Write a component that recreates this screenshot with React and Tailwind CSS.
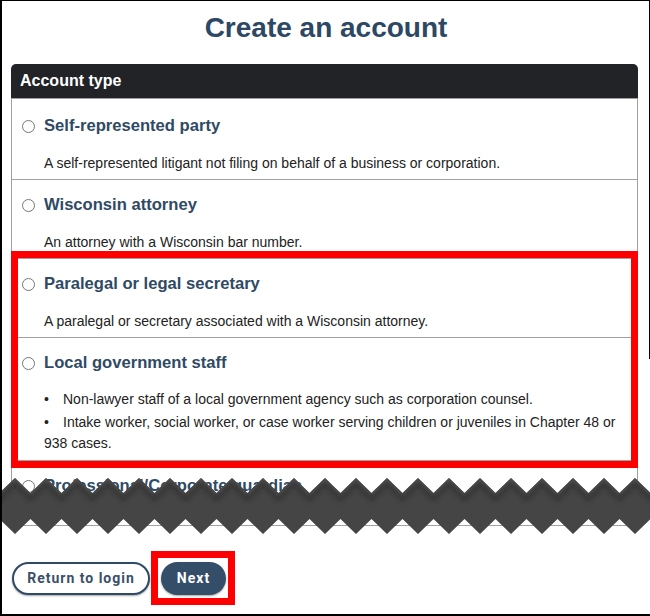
import React from "react";

function Radio() {
  return (
    <span className="block w-[13px] h-[13px] shrink-0 rounded-full border border-[#767676] bg-white" />
  );
}

function Heading({ children }) {
  return (
    <div className="flex items-center gap-[9px]">
      <Radio />
      <span className="text-[16.6px] leading-[20px] font-bold text-[#2f4a65]">{children}</span>
    </div>
  );
}

function Zigzag() {
  const period = 31;
  const start = 15;
  const top = [];
  const bottom = [];
  for (let k = -1; k <= 21; k++) {
    const x = start + period * k;
    top.push(`${x},2`, `${x + period / 2},17`);
  }
  for (let k = 21; k >= -1; k--) {
    const x = start + period * k;
    bottom.push(`${x + period / 2},43`, `${x},58`);
  }
  const poly = [...top, ...bottom].join(" ");
  const shadow = [];
  for (let k = -1; k <= 21; k++) {
    const x = start + period * k;
    shadow.push(`${x},8`, `${x + period / 2},23`);
  }
  return (
    <svg width="652" height="62" viewBox="0 0 652 62" className="block">
      <defs>
        <clipPath id="zz">
          <polygon points={poly} />
        </clipPath>
        <filter id="bl" x="-10%" y="-50%" width="120%" height="200%">
          <feGaussianBlur stdDeviation="2" />
        </filter>
      </defs>
      <polygon points={poly} fill="#454545" />
      <g clipPath="url(#zz)">
        <polyline points={top.join(" ")} fill="none" stroke="#525252" strokeWidth="4" filter="url(#bl)" />
        <polyline points={shadow.join(" ")} fill="none" stroke="#2f2f2f" strokeWidth="4" opacity="0.7" filter="url(#bl)" />
      </g>
    </svg>
  );
}

export default function App() {
  return (
    <div className="relative w-[650px] h-[616px] overflow-hidden bg-white border-l-2 border-t border-b-2 border-black font-['Liberation_Sans',Arial,sans-serif] text-[#222]">
      <div className="absolute right-0 top-0 w-px h-[358px] bg-black" />

      <h1 className="pt-[11px] text-center text-[28px] leading-[32px] font-bold text-[#2c4864]">
        Create an account
      </h1>

      <div className="mt-[20px] ml-[9px] w-[627px]">
        <div className="h-[35px] flex items-center pl-[9px] rounded-t-[5px] bg-[#212327] border-b border-[#9e9e9e] text-white text-[16px] font-bold">
          Account type
        </div>
        <div className="border-x border-b border-[#a0a0a0]">
          <div className="pl-[10px] pr-[16px] pt-[17px] pb-[6px]">
            <Heading>Self-represented party</Heading>
            <p className="mt-[17px] ml-[22px] text-[14px] leading-[20px]">
              A self-represented litigant not filing on behalf of a business or corporation.
            </p>
          </div>
          <div className="border-t border-[#a0a0a0] pl-[10px] pr-[16px] pt-[15px] pb-[6px]">
            <Heading>Wisconsin attorney</Heading>
            <p className="mt-[17px] ml-[22px] text-[14px] leading-[20px]">
              An attorney with a Wisconsin bar number.
            </p>
          </div>
          <div className="relative">
            <div className="border-t border-[#a0a0a0] pl-[10px] pr-[16px] pt-[15px] pb-[6px]">
              <Heading>Paralegal or legal secretary</Heading>
              <p className="mt-[17px] ml-[22px] text-[14px] leading-[20px]">
                A paralegal or secretary associated with a Wisconsin attorney.
              </p>
            </div>
            <div className="border-t border-[#a0a0a0] pl-[10px] pr-[16px] pt-[15px] pb-[6px]">
              <Heading>Local government staff</Heading>
              <ul className="mt-[16px] ml-[22px] text-[14px] leading-[21px]">
                <li>
                  <span className="inline-block w-[19px]">•</span>
                  Non-lawyer staff of a local government agency such as corporation counsel.
                </li>
                <li className="mt-[2px]">
                  <span className="inline-block w-[19px]">•</span>
                  Intake worker, social worker, or case worker serving children or juveniles in Chapter 48 or 938 cases.
                </li>
              </ul>
            </div>
            <div className="absolute left-[-1px] right-[-1px] top-[-7px] bottom-[-8px] border-[7px] border-[#ff0000]" />
          </div>
          <div className="border-t border-[#a0a0a0] pl-[10px] pr-[16px] pt-[15px] pb-[29px]">
            <Heading>Professional/Corporate guardian</Heading>
          </div>
        </div>
      </div>

      <div className="mt-[36px] ml-[10px] flex items-center gap-[11px] font-['Roboto',Arial,sans-serif]">
        <button className="w-[138px] h-[33px] rounded-full border-2 border-[#2f4a66] bg-white text-[14px] font-bold tracking-[1px] text-[#3b5068] shadow-[0_1px_2px_rgba(0,0,0,0.35)]">
          Return to login
        </button>
        <div className="relative">
          <button className="block w-[65px] h-[33px] rounded-full bg-[#344e69] text-white text-[14px] font-bold tracking-[1px] shadow-[0_1px_2px_rgba(0,0,0,0.35)]">
            Next
          </button>
          <div className="absolute left-[-10px] right-[-9px] top-[-11px] bottom-[-10px] border-[7px] border-[#ff0000]" />
        </div>
      </div>

      <div className="absolute left-[-2px] top-[475px]">
        <Zigzag />
      </div>
    </div>
  );
}
